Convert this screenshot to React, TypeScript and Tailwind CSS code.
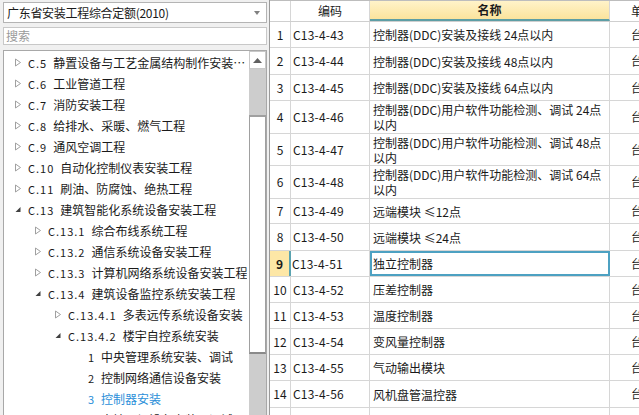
import React from "react";

const Closed = () => (
  <svg width="8" height="9" viewBox="0 0 8 9" className="shrink-0">
    <path d="M1.5 1 L6.5 4.5 L1.5 8 Z" fill="white" stroke="#a0a0a0" strokeWidth="1" />
  </svg>
);
const Open = () => (
  <svg width="8" height="9" viewBox="0 0 8 9" className="shrink-0">
    <path d="M6.5 2 L6.5 7 L1.5 7 Z" fill="#404040" />
  </svg>
);

type TreeItem = { level: number; icon: "closed" | "open" | "none"; num: string; text: string; selected?: boolean };

const tree: TreeItem[] = [
  { level: 0, icon: "closed", num: "C.5", text: "静置设备与工艺金属结构制作安装工程" },
  { level: 0, icon: "closed", num: "C.6", text: "工业管道工程" },
  { level: 0, icon: "closed", num: "C.7", text: "消防安装工程" },
  { level: 0, icon: "closed", num: "C.8", text: "给排水、采暖、燃气工程" },
  { level: 0, icon: "closed", num: "C.9", text: "通风空调工程" },
  { level: 0, icon: "closed", num: "C.10", text: "自动化控制仪表安装工程" },
  { level: 0, icon: "closed", num: "C.11", text: "刷油、防腐蚀、绝热工程" },
  { level: 0, icon: "open", num: "C.13", text: "建筑智能化系统设备安装工程" },
  { level: 1, icon: "closed", num: "C.13.1", text: "综合布线系统工程" },
  { level: 1, icon: "closed", num: "C.13.2", text: "通信系统设备安装工程" },
  { level: 1, icon: "closed", num: "C.13.3", text: "计算机网络系统设备安装工程" },
  { level: 1, icon: "open", num: "C.13.4", text: "建筑设备监控系统安装工程" },
  { level: 2, icon: "closed", num: "C.13.4.1", text: "多表远传系统设备安装" },
  { level: 2, icon: "open", num: "C.13.4.2", text: "楼宇自控系统安装" },
  { level: 3, icon: "none", num: "1", text: "中央管理系统安装、调试" },
  { level: 3, icon: "none", num: "2", text: "控制网络通信设备安装" },
  { level: 3, icon: "none", num: "3", text: "控制器安装", selected: true },
  { level: 3, icon: "none", num: "4", text: "末端现场设备安装、调试" },
];

const rows: { n: number; code: string; name: string[]; unit: string; h: number }[] = [
  { n: 1, code: "C13-4-43", name: ["控制器(DDC)安装及接线 24点以内"], unit: "台", h: 26 },
  { n: 2, code: "C13-4-44", name: ["控制器(DDC)安装及接线 48点以内"], unit: "台", h: 27 },
  { n: 3, code: "C13-4-45", name: ["控制器(DDC)安装及接线 64点以内"], unit: "台", h: 26 },
  { n: 4, code: "C13-4-46", name: ["控制器(DDC)用户软件功能检测、调试 24点", "以内"], unit: "台", h: 33 },
  { n: 5, code: "C13-4-47", name: ["控制器(DDC)用户软件功能检测、调试 48点", "以内"], unit: "台", h: 32 },
  { n: 6, code: "C13-4-48", name: ["控制器(DDC)用户软件功能检测、调试 64点", "以内"], unit: "台", h: 33 },
  { n: 7, code: "C13-4-49", name: ["远端模块 ≤12点"], unit: "台", h: 25 },
  { n: 8, code: "C13-4-50", name: ["远端模块 ≤24点"], unit: "台", h: 27 },
  { n: 9, code: "C13-4-51", name: ["独立控制器"], unit: "台", h: 26 },
  { n: 10, code: "C13-4-52", name: ["压差控制器"], unit: "台", h: 26 },
  { n: 11, code: "C13-4-53", name: ["温度控制器"], unit: "台", h: 26 },
  { n: 12, code: "C13-4-54", name: ["变风量控制器"], unit: "台", h: 26 },
  { n: 13, code: "C13-4-55", name: ["气动输出模块"], unit: "台", h: 26 },
  { n: 14, code: "C13-4-56", name: ["风机盘管温控器"], unit: "台", h: 27 },
  { n: 15, code: "C13-4-57", name: ["风机盘管控制器"], unit: "台", h: 26 },
];

const pad = ["pl-[10px]", "pl-[30px]", "pl-[50px]", "pl-[78px]"];

export default function App() {
  return (
    <div className="w-[639px] h-[415px] overflow-hidden bg-[#f0f0f0] flex font-['Noto_Sans_CJK_SC',sans-serif] text-[12px] text-[#1a1a1a]">
      {/* Left panel */}
      <div className="w-[268px] shrink-0 flex flex-col pl-[3px] pt-[2px]">
        <div className="h-[21px] w-[264px] bg-white border border-[#b4b4b4] flex items-center pl-[3px] pr-[6px]">
          <span className="flex-1 leading-[16px] tracking-[-0.3px]">广东省安装工程综合定额(2010)</span>
          <svg width="6" height="4" viewBox="0 0 6 4"><path d="M0 0 L6 0 L3 4 Z" fill="#808080" /></svg>
        </div>
        <div className="mt-[4px] h-[18px] w-[264px] bg-white border border-[#c8c8c8] flex items-center pl-[2px] text-[#9a9a9a] leading-[16px]">
          搜索
        </div>
        <div className="mt-[5px] flex-1 w-[264px] bg-white border border-[#a8a8a8] border-b-0 flex overflow-hidden">
          <div className="flex-1 pt-[1px] overflow-hidden">
            {tree.map((t, i) => (
              <div key={i} className={"h-[21px] flex items-center whitespace-nowrap " + pad[t.level]}>
                {t.icon === "closed" && <Closed />}
                {t.icon === "open" && <Open />}
                <span
                  className={
                    "ml-[6px] leading-[16px] overflow-hidden text-ellipsis " +
                    (t.selected ? "text-[#2b8fd9]" : "")
                  }
                >
                  <span className="text-[11px] tracking-[1px]">{t.num}</span>
                  <span className="ml-[6px]">{t.text}</span>
                </span>
              </div>
            ))}
          </div>
          <div className="w-[17px] shrink-0 flex flex-col bg-[#cdcdcd]">
            <div className="h-[18px] bg-white border border-[#c8c8c8] flex items-center justify-center">
              <svg width="9" height="5" viewBox="0 0 9 5"><path d="M0 5 L4.5 0 L9 5 Z" fill="#606060" /></svg>
            </div>
            <div className="h-[46px]" />
            <div className="h-[239px] bg-white border border-[#a0a0a0] border-t-[2px] border-b-[2px] border-b-[#8a8a8a]" />
          </div>
        </div>
      </div>
      {/* Right grid */}
      <div className="ml-[1px] flex-1 bg-white border-l border-[#9a9a9a] overflow-hidden">
        <div className="flex h-[22px] border-b border-[#cfcfcf] border-t border-t-[#bdbdbd]">
          <div className="w-[21px] shrink-0 border-r border-[#d6d6d6]" />
          <div className="w-[79px] shrink-0 border-r border-[#d6d6d6] flex items-center justify-center leading-[16px]">编码</div>
          <div className="w-[240px] shrink-0 border-r border-[#d6d6d6] bg-gradient-to-b from-[#fff3c9] to-[#fbe39c] border-b-[2px] border-b-[#5d9ea5] flex items-center justify-center font-bold leading-[16px]">
            名称
          </div>
          <div className="flex-1 flex items-center pl-[21px] leading-[16px] whitespace-nowrap">单位</div>
        </div>
        {rows.map((r) => {
          const sel = r.n === 9;
          return (
            <div key={r.n} className="flex border-b border-[#d6d6d6]" style={{ height: r.h }}>
              <div
                className={
                  "w-[21px] shrink-0 flex items-center justify-center leading-[16px] " +
                  (sel ? "bg-[#fde7a6] font-bold border-r-[2px] border-[#5aa3b0]" : "border-r border-[#d6d6d6]")
                }
              >
                {r.n}
              </div>
              <div className={"w-[79px] shrink-0 border-r border-[#d6d6d6] flex items-center leading-[16px] " + (sel ? "pl-[1px]" : "pl-[2px]")}>
                <span className="tracking-[0.2px]">{r.code}</span>
              </div>
              <div
                className={
                  "w-[240px] shrink-0 flex flex-col justify-center leading-[15px] " +
                  (sel ? "border-[2px] border-[#4da1c2] pl-[1px]" : "border-r border-[#d6d6d6] pl-[3px]")
                }
              >
                {r.name.map((l, i) => (
                  <div key={i} className="whitespace-nowrap">{l}</div>
                ))}
              </div>
              <div className="flex-1 flex items-center pl-[21px] leading-[16px] whitespace-nowrap">{r.unit}</div>
            </div>
          );
        })}
      </div>
    </div>
  );
}
